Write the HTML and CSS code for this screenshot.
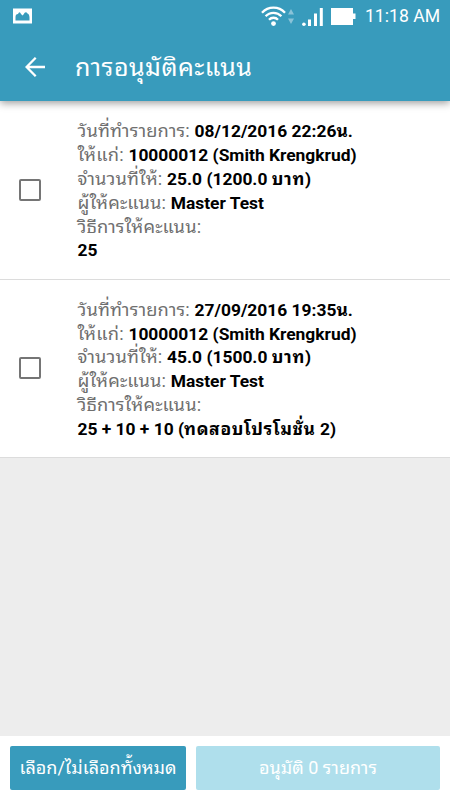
FILE: index.html
```html
<!DOCTYPE html>
<html lang="th">
<head>
    <meta charset="UTF-8">
    <title>การอนุมัติคะแนน</title>
    <link rel="stylesheet" href="styles.css">
</head>
<body>
    <header class="header">
        <div class="status-bar">
            <svg class="icon-picture" width="19" height="16" viewBox="0 0 19 16">
                <path fill="#fff" fill-rule="evenodd" d="M0 .5h19v15H0zM2.500 12.500h14V9.500Q16.300 6 14.500 5.500 12.500 2.500 10.500 6.500L9.500 7.500 8 6Q6.500 2.500 5 6 2.500 6 2.500 9z"/>
            </svg>
            <svg class="icon-wifi" width="34" height="22" viewBox="0 0 34 22">
                <g fill="none" stroke="#fff" stroke-width="2.3">
                    <path d="M1 7.7a15.600 15.600 0 0 1 23 0"/>
                    <path d="M4.600 11.300a10.800 10.800 0 0 1 15.800 0"/>
                    <path d="M8 14.700a6.200 6.200 0 0 1 9 0"/>
                </g>
                <circle cx="12.500" cy="18.600" r="2.400" fill="#fff"/>
                <path fill="#8ac3d8" d="M30 4l3 5.500h-6zM27 13.500h6L30 19z"/>
            </svg>
            <svg class="icon-signal" width="21" height="18" viewBox="0 0 21 18">
                <path fill="#fff" d="M6 11.500h3V18H6zM12 5.500h3V18h-3zM17.800 0h3v18h-3z"/>
                <circle cx="1.900" cy="16.200" r="1.800" fill="#fff"/>
            </svg>
            <svg class="icon-battery" width="25" height="17" viewBox="0 0 25 17">
                <path fill="#fff" d="M0 0h22v5.500h2.500v5.500H22v6H0z"/>
            </svg>
            <span class="clock">11:18 AM</span>
        </div>
        <div class="toolbar">
            <svg class="icon-back" width="20" height="20" viewBox="0 0 20 20">
                <path fill="none" stroke="#fff" stroke-width="2.300" d="M20 10H2M10.700 .8L1.600 10l9.100 9.200"/>
            </svg>
            <h1 class="title">การอนุมัติคะแนน</h1>
        </div>
    </header>

    <main class="list">
        <label class="item">
            <input type="checkbox" class="check">
            <div class="detail">
                <p>วันที่ทำรายการ: <b>08/12/2016 22:26น.</b></p>
                <p>ให้แก่: <b>10000012 (Smith Krengkrud)</b></p>
                <p>จำนวนที่ให้: <b>25.0 (1200.0 <span class="th">บาท</span>)</b></p>
                <p>ผู้ให้คะแนน: <b>Master Test</b></p>
                <p>วิธีการให้คะแนน:</p>
                <p><b>25</b></p>
            </div>
        </label>
        <label class="item">
            <input type="checkbox" class="check">
            <div class="detail">
                <p>วันที่ทำรายการ: <b>27/09/2016 19:35น.</b></p>
                <p>ให้แก่: <b>10000012 (Smith Krengkrud)</b></p>
                <p>จำนวนที่ให้: <b>45.0 (1500.0 <span class="th">บาท</span>)</b></p>
                <p>ผู้ให้คะแนน: <b>Master Test</b></p>
                <p>วิธีการให้คะแนน:</p>
                <p><b>25 + 10 + 10 (<span class="th">ทดสอบโปรโมชั่น</span> 2)</b></p>
            </div>
        </label>
    </main>

    <footer class="actions">
        <button class="btn btn-select">เลือก/ไม่เลือกทั้งหมด</button>
        <button class="btn btn-approve" disabled>อนุมัติ 0 รายการ</button>
    </footer>
</body>
</html>
```

FILE: styles.css
```css
html, body {
    margin: 0;
    padding: 0;
    height: 100%;
}

body {
    display: flex;
    flex-direction: column;
    background: #ededed;
    font-family: Roboto, "Noto Sans Thai Looped", Loma, Waree, Garuda, "Noto Sans", sans-serif;
    overflow: hidden;
}

.header {
    position: relative;
    flex: none;
    height: 101px;
    background: #389bbc;
    color: #fff;
    box-shadow: 0 2px 8px rgba(0, 0, 0, .4);
}

.status-bar {
    display: flex;
    align-items: center;
    height: 32px;
    padding: 0 10px 0 13px;
}

.icon-wifi {
    margin-left: auto;
}

.icon-signal {
    margin: 2px 0 0 7px;
}

.icon-battery {
    margin-left: 8px;
}

.clock {
    margin-left: 9px;
    font-size: 17.6px;
    line-height: 32px;
    white-space: nowrap;
}

.toolbar {
    display: flex;
    align-items: center;
    height: 69px;
    padding-left: 25px;
}

.title {
    margin: 2px 0 0 30px;
    font-size: 25px;
    font-weight: 400;
    letter-spacing: .5px;
    line-height: 40px;
    white-space: nowrap;
}

.list {
    flex: 1;
}

.item {
    display: flex;
    align-items: center;
    box-sizing: border-box;
    height: 178.5px;
    padding: 0 19px;
    background: #fff;
    border-bottom: 1px solid #dcdcdc;
}

.check {
    appearance: none;
    flex: none;
    box-sizing: border-box;
    width: 22px;
    height: 22px;
    margin: 0;
    border: 2px solid #757575;
    border-radius: 2px;
}

.detail {
    margin: 2px 0 0 36.5px;
    font-size: 18.3px;
    letter-spacing: .13px;
    color: #6f6f6f;
}

.detail p {
    margin: 0;
    height: 23.85px;
    line-height: 23.85px;
    white-space: nowrap;
}

.detail b {
    font-size: 17.4px;
    letter-spacing: 0;
    color: #000;
}

.detail .th {
    letter-spacing: .7px;
}

.actions {
    display: flex;
    flex: none;
    gap: 10px;
    box-sizing: border-box;
    height: 64px;
    padding: 10px;
    background: #fff;
}

.btn {
    height: 44px;
    padding: 0;
    border: none;
    border-radius: 2px;
    font-family: inherit;
    font-size: 18px;
    line-height: 44px;
    color: #fff;
    white-space: nowrap;
}

.btn-select {
    width: 176px;
    background: #389bbc;
}

.btn-approve {
    flex: 1;
    background: #afdfec;
}
```
